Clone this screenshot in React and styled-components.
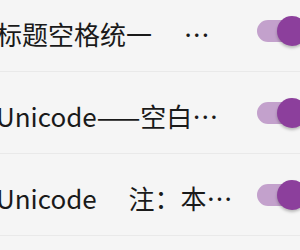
import React from 'react';
import styled, { createGlobalStyle } from 'styled-components';

const GlobalStyle = createGlobalStyle`
  html, body {
    margin: 0;
    padding: 0;
    background: #f5f5f5;
    overflow: hidden;
  }
  body {
    width: 300px;
    height: 250px;
    font-family: 'Noto Sans CJK SC', 'Noto Sans', sans-serif;
  }
`;

const List = styled.div`
  margin: -10px 0 0 -4px;
  width: 304px;
`;

const Row = styled.div`
  display: flex;
  align-items: center;
  height: 81px;
  border-bottom: 1px solid #e9e9e9;
`;

const Title = styled.div`
  flex: 1;
  min-width: 0;
  font-size: 26px;
  color: #1a1a1a;
  white-space: pre;
  padding-top: 6px;
`;

const Track = styled.div`
  position: relative;
  flex: none;
  width: 46px;
  height: 22px;
  border-radius: 11px;
  background: #c3a1cc;
  margin-right: -3px;
  margin-left: 12px;
`;

const Thumb = styled.div`
  position: absolute;
  top: -4px;
  right: -4px;
  width: 30px;
  height: 30px;
  border-radius: 50%;
  background: #8c3f9c;
  box-shadow: 0 2px 3px rgba(0, 0, 0, 0.25);
`;

const Switch = () => (
  <Track>
    <Thumb />
  </Track>
);

const items = ['标题空格统一　 …', 'Unicode——空白…', 'Unicode　 注：本…'];

export default function App() {
  return (
    <>
      <GlobalStyle />
      <List>
        {items.map((t) => (
          <Row key={t}>
            <Title>{t}</Title>
            <Switch />
          </Row>
        ))}
      </List>
    </>
  );
}
